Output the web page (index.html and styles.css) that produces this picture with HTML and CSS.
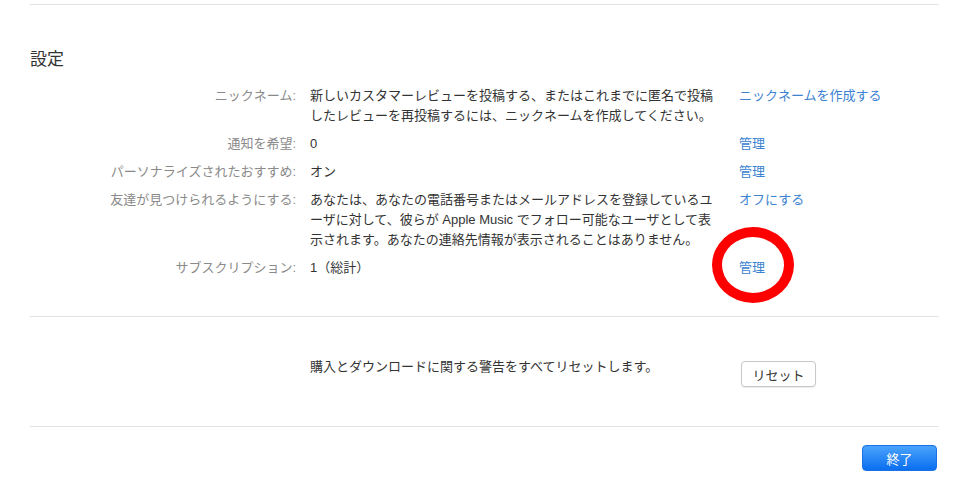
FILE: index.html
```html
<!DOCTYPE html>
<html lang="ja">
<head>
    <meta charset="UTF-8">
    <meta name="viewport" content="width=device-width, initial-scale=1.0">
    <title>アカウント設定</title>
    <link rel="stylesheet" href="styles.css">
</head>
<body>
    <div class="account-page">
        <section class="settings">
            <h2>設定</h2>

            <div class="setting-row">
                <div class="label">ニックネーム:</div>
                <div class="value">新しいカスタマーレビューを投稿する、またはこれまでに匿名で投稿したレビューを再投稿するには、ニックネームを作成してください。</div>
                <div class="action"><a href="#">ニックネームを作成する</a></div>
            </div>

            <div class="setting-row">
                <div class="label">通知を希望:</div>
                <div class="value">0</div>
                <div class="action"><a href="#">管理</a></div>
            </div>

            <div class="setting-row">
                <div class="label">パーソナライズされたおすすめ:</div>
                <div class="value">オン</div>
                <div class="action"><a href="#">管理</a></div>
            </div>

            <div class="setting-row">
                <div class="label">友達が見つけられるようにする:</div>
                <div class="value">あなたは、あなたの電話番号またはメールアドレスを登録しているユーザに対して、彼らが Apple Music でフォロー可能なユーザとして表示されます。あなたの連絡先情報が表示されることはありません。</div>
                <div class="action"><a href="#">オフにする</a></div>
            </div>

            <div class="setting-row">
                <div class="label">サブスクリプション:</div>
                <div class="value">1（総計）</div>
                <div class="action">
                    <a href="#">管理</a>
                    <span class="highlight-ring"></span>
                </div>
            </div>
        </section>

        <section class="warnings">
            <div class="setting-row">
                <div class="label"></div>
                <div class="value">購入とダウンロードに関する警告をすべてリセットします。</div>
                <div class="action"><button class="btn">リセット</button></div>
            </div>
        </section>

        <div class="footer">
            <button class="btn btn-primary">終了</button>
        </div>
    </div>
</body>
</html>
```

FILE: styles.css
```css
body {
    font-family: 'Liberation Sans', 'Noto Sans CJK JP', sans-serif;
    font-size: 13px;
    line-height: 20px;
    color: #333;
    background-color: white;
    margin: 0;
    padding-top: 4px;
}

.account-page {
    margin: 0 25px 0 30px;
}

.settings {
    border-top: 1px solid #e3e3e3;
    padding: 45px 0 38px;
}

h2 {
    font-size: 17px;
    font-weight: normal;
    line-height: 20px;
    margin: 0 0 16px;
}

.setting-row {
    display: grid;
    grid-template-columns: 266px 410px 1fr;
    column-gap: 14px;
    margin-bottom: 8px;
}

.setting-row:last-child {
    margin-bottom: 0;
}

.label {
    color: #8a8a8a;
    text-align: right;
}

.action {
    position: relative;
    padding-left: 5px;
}

a {
    color: #3b82d0;
    text-decoration: none;
}

.highlight-ring {
    position: absolute;
    left: -22px;
    top: -31px;
    width: 82px;
    height: 76px;
    box-sizing: border-box;
    border: 10px solid #ff0000;
    border-radius: 50%;
}

.warnings {
    border-top: 1px solid #e3e3e3;
    border-bottom: 1px solid #e3e3e3;
    padding: 40px 0 39px;
}

.warnings .setting-row {
    margin: 0;
}

.btn {
    font-family: inherit;
    font-size: 13px;
    color: #333;
    background-color: white;
    border: 1px solid #c8c8c8;
    border-radius: 4px;
    box-shadow: 0 1px 1px rgba(0, 0, 0, 0.08);
    width: 75px;
    height: 26px;
    padding: 0;
    cursor: pointer;
}

.warnings .btn {
    margin: 4px 0 0 2px;
}

.footer {
    display: flex;
    justify-content: flex-end;
    padding: 18px 2px 0 0;
}

.btn-primary {
    color: white;
    border-color: #1a73e6;
    background: linear-gradient(#4aa3fc, #0a6ef0);
    box-shadow: none;
}
```
